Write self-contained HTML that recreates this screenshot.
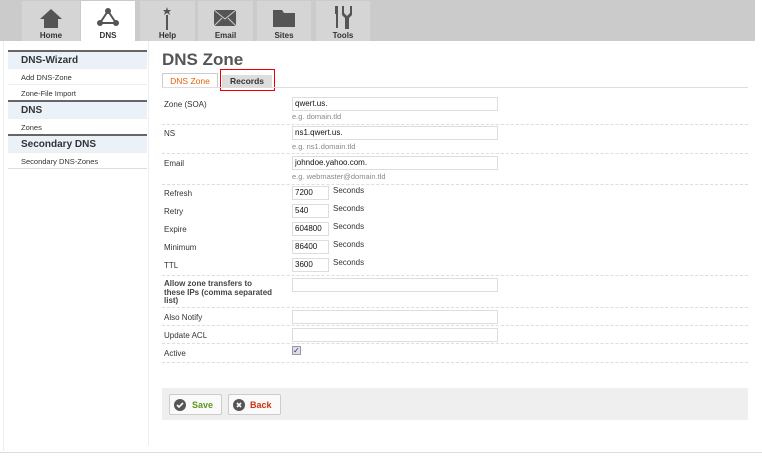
<!DOCTYPE html>
<html><head><style>
*{box-sizing:border-box;margin:0;padding:0}
body{width:762px;height:456px;background:#fff;font-family:"Liberation Sans",sans-serif;font-size:9px;color:#444;position:relative;overflow:hidden}
.top{position:absolute;left:0;top:0;width:755px;height:41px;background:#cbcbcb}
.tab{position:absolute;top:1px;height:40px;background:#d5d5d5;text-align:center;font-size:8px;font-weight:bold;color:#333}
.tab span{position:absolute;left:0;right:0;top:30px}
.tab.on{background:#fff}
.side{position:absolute;left:8px;top:50px;width:139px}
.sh{background:#eaf1f8;border-top:2px solid #666;font-size:10px;font-weight:bold;color:#333;padding:3px 0 0 13px;height:18px}
.si{font-size:7.5px;color:#333;padding:4px 0 0 13px;height:16px;border-top:1px solid #eee}
.a{position:absolute}
h1{position:absolute;left:162px;top:50px;font-size:17px;color:#555;font-weight:bold}
.lbl{position:absolute;left:164px;font-size:8px;color:#333}
.in{position:absolute;left:292px;width:206px;height:14px;border:1px solid #ddd;font-size:8px;color:#111;padding:1px 2px}
.sm{width:37px}
.hint{position:absolute;left:292px;font-size:7.5px;color:#888}
.sec{position:absolute;left:333px;font-size:8px;color:#333}
.dl{position:absolute;left:162px;width:586px;border-top:1px dashed #ddd}
</style></head><body>
<div style="position:absolute;left:3px;top:41px;height:410px;border-left:1px solid #eee"></div>
<div style="position:absolute;left:0;top:452px;width:762px;border-top:1px solid #ddd"></div>
<div style="position:absolute;left:148px;top:41px;height:405px;border-left:1px solid #eee"></div>
<div class="top"></div>
<div class="tab" style="left:22px;width:58px"><svg class="a" style="left:17px;top:7px" width="24" height="21"><path d="M12 1L1 11h4v9h14v-9h4z" fill="#555"/></svg><span>Home</span></div>
<div class="tab on" style="left:81px;width:54px"><svg class="a" style="left:16px;top:6px" width="22" height="20"><path d="M11 4L3 16h16z" stroke="#555" stroke-width="2" fill="none"/><circle cx="11" cy="4" r="3" fill="#555"/><circle cx="3" cy="16" r="3" fill="#555"/><circle cx="19" cy="16" r="3" fill="#555"/></svg><span>DNS</span></div>
<div class="tab" style="left:140px;width:55px"><svg class="a" style="left:22px;top:5px" width="10" height="24"><path d="M5 1l1 3h3l-2 2 1 3-3-2-3 2 1-3-2-2h3z" fill="#555"/><rect x="4" y="9" width="2" height="15" fill="#555"/></svg><span>Help</span></div>
<div class="tab" style="left:198px;width:55px"><svg class="a" style="left:15px;top:8px" width="24" height="18"><rect x="1" y="1" width="22" height="16" fill="#555"/><path d="M1 1l11 9 11-9M1 17l8-8M23 17l-8-8" stroke="#ccc" fill="none"/></svg><span>Email</span></div>
<div class="tab" style="left:257px;width:54px"><svg class="a" style="left:15px;top:7px" width="24" height="20"><path d="M1 2h9l2 3h11v14H1z" fill="#555"/></svg><span>Sites</span></div>
<div class="tab" style="left:316px;width:54px"><svg class="a" style="left:16px;top:4px" width="22" height="24"><rect x="3" y="1" width="3" height="8" fill="#555"/><rect x="4" y="9" width="2" height="14" fill="#555"/><path d="M12 1v7l3 3 3-3V1h2v9l-3 3v11h-4V13l-3-3V1z" fill="#555"/></svg><span>Tools</span></div>

<div class="side">
<div class="sh">DNS-Wizard</div>
<div class="si">Add DNS-Zone</div>
<div class="si">Zone-File Import</div>
<div class="sh">DNS</div>
<div class="si">Zones</div>
<div class="sh">Secondary DNS</div>
<div class="si">Secondary DNS-Zones</div>
<div style="border-top:1px solid #ddd"></div>
</div>

<h1>DNS Zone</h1>
<div class="a" style="left:162px;top:73px;width:56px;height:14px;border:1px solid #ccc;border-bottom:none;color:#e8600a;font-size:8.5px;text-align:center;padding-top:2px">DNS Zone</div>
<div class="a" style="left:220px;top:69px;width:55px;height:22px;border:1px solid #e00"></div>
<div class="a" style="left:222px;top:75px;width:50px;height:12px;background:#ddd;font-size:8.5px;font-weight:bold;color:#333;text-align:center;padding-top:1px">Records</div>
<div class="a" style="left:162px;top:87px;width:586px;border-top:1px solid #ddd"></div>

<div class="lbl" style="top:100px">Zone (SOA)</div><div class="in" style="top:97px">qwert.us.</div><div class="hint" style="top:112px">e.g. domain.tld</div><div class="dl" style="top:124px"></div>
<div class="lbl" style="top:129px">NS</div><div class="in" style="top:126px">ns1.qwert.us.</div><div class="hint" style="top:142px">e.g. ns1.domain.tld</div><div class="dl" style="top:153px"></div>
<div class="lbl" style="top:159px">Email</div><div class="in" style="top:156px">johndoe.yahoo.com.</div><div class="hint" style="top:172px">e.g. webmaster@domain.tld</div><div class="dl" style="top:184px"></div>
<div class="lbl" style="top:189px">Refresh</div><div class="in sm" style="top:186px">7200</div><div class="sec" style="top:186px">Seconds</div>
<div class="lbl" style="top:207px">Retry</div><div class="in sm" style="top:204px">540</div><div class="sec" style="top:204px">Seconds</div>
<div class="lbl" style="top:225px">Expire</div><div class="in sm" style="top:222px">604800</div><div class="sec" style="top:222px">Seconds</div>
<div class="lbl" style="top:243px">Minimum</div><div class="in sm" style="top:240px">86400</div><div class="sec" style="top:240px">Seconds</div>
<div class="lbl" style="top:261px">TTL</div><div class="in sm" style="top:258px">3600</div><div class="sec" style="top:258px">Seconds</div>
<div class="dl" style="top:275px"></div>
<div class="lbl" style="top:280px;line-height:8.5px;font-weight:bold;color:#444">Allow zone transfers to<br>these IPs (comma separated<br>list)</div><div class="in" style="top:278px"></div>
<div class="dl" style="top:307px"></div>
<div class="lbl" style="top:313px">Also Notify</div><div class="in" style="top:310px"></div>
<div class="dl" style="top:325px"></div>
<div class="lbl" style="top:331px">Update ACL</div><div class="in" style="top:328px"></div>
<div class="dl" style="top:343px"></div>
<div class="lbl" style="top:349px">Active</div>
<div class="a" style="left:292px;top:346px;width:9px;height:9px;border:1px solid #999;background:#dde;font-size:8px;line-height:7px;color:#336">✓</div>
<div class="dl" style="top:362px"></div>

<div class="a" style="left:162px;top:388px;width:586px;height:32px;background:#efefef"></div>
<div class="a" style="left:169px;top:394px;width:53px;height:21px;background:#fafafa;border:1px solid #ccc;border-radius:2px"><svg class="a" style="left:4px;top:4px" width="12" height="12"><circle cx="6" cy="6" r="6" fill="#555"/><path d="M3 6l2 2 4-4" stroke="#fff" stroke-width="1.6" fill="none"/></svg><span class="a" style="left:22px;top:5px;font-size:9px;font-weight:bold;color:#5a9a1a">Save</span></div>
<div class="a" style="left:228px;top:394px;width:53px;height:21px;background:#fafafa;border:1px solid #ccc;border-radius:2px"><svg class="a" style="left:4px;top:4px" width="12" height="12"><circle cx="6" cy="6" r="6" fill="#555"/><path d="M4 4l4 4M8 4l-4 4" stroke="#fff" stroke-width="1.6"/></svg><span class="a" style="left:21px;top:5px;font-size:9px;font-weight:bold;color:#d03010">Back</span></div>
</body></html>
